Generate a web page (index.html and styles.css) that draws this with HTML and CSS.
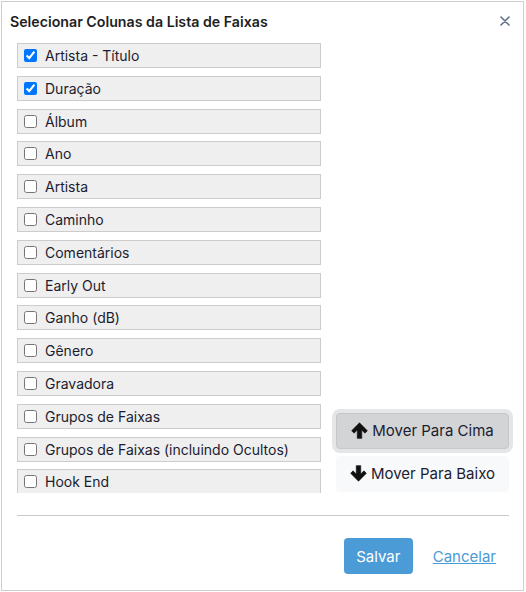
FILE: index.html
```html
<!DOCTYPE html>
<html lang="pt">
<head>
<meta charset="utf-8">
<title>Selecionar Colunas</title>
<link rel="stylesheet" href="styles.css">
</head>
<body>
<div class="dialog">
  <div class="header">
    <h1 class="title">Selecionar Colunas da Lista de Faixas</h1>
    <button class="close" aria-label="Fechar">
      <svg width="10" height="10" viewBox="0 0 10 10"><path d="M1 1L9 9M9 1L1 9" stroke="#5f6f86" stroke-width="1.6" stroke-linecap="round"/></svg>
    </button>
  </div>
  <div class="body">
    <div class="list">
      <label class="row"><input type="checkbox" checked><span>Artista - Título</span></label>
      <label class="row"><input type="checkbox" checked><span>Duração</span></label>
      <label class="row"><input type="checkbox"><span>Álbum</span></label>
      <label class="row"><input type="checkbox"><span>Ano</span></label>
      <label class="row"><input type="checkbox"><span>Artista</span></label>
      <label class="row"><input type="checkbox"><span>Caminho</span></label>
      <label class="row"><input type="checkbox"><span>Comentários</span></label>
      <label class="row"><input type="checkbox"><span>Early Out</span></label>
      <label class="row"><input type="checkbox"><span>Ganho (dB)</span></label>
      <label class="row"><input type="checkbox"><span>Gênero</span></label>
      <label class="row"><input type="checkbox"><span>Gravadora</span></label>
      <label class="row"><input type="checkbox"><span>Grupos de Faixas</span></label>
      <label class="row"><input type="checkbox"><span>Grupos de Faixas (incluindo Ocultos)</span></label>
      <label class="row"><input type="checkbox"><span>Hook End</span></label>
    </div>
    <div class="side">
      <button class="move focused">
        <svg class="arrow" width="17" height="17" viewBox="0 0 16 16"><path d="M8 0.8L15.4 8.2L13.1 10.5L10.1 7.5V15.4H5.9V7.5L2.9 10.5L0.6 8.2Z" fill="#111" stroke="#111" stroke-width="0.6" stroke-linejoin="round"/></svg>
        <span>Mover Para Cima</span>
      </button>
      <button class="move">
        <svg class="arrow" width="17" height="17" viewBox="0 0 16 16"><path d="M8 15.2L15.4 7.8L13.1 5.5L10.1 8.5V0.6H5.9V8.5L2.9 5.5L0.6 7.8Z" fill="#111" stroke="#111" stroke-width="0.6" stroke-linejoin="round"/></svg>
        <span>Mover Para Baixo</span>
      </button>
    </div>
  </div>
  <div class="sep"></div>
  <div class="footer">
    <button class="save">Salvar</button>
    <a class="cancel" href="#">Cancelar</a>
  </div>
</div>
</body>
</html>
```
FILE: styles.css
```css
html, body {
  margin: 0;
  padding: 0;
  background: #ffffff;
}
body {
  font-family: Inter, "Noto Sans", sans-serif;
  color: #1a1a2a;
}
.dialog {
  margin: 1px 0 0 1px;
  width: 521px;
  height: 588px;
  border: 1px solid #cfcfcf;
  background: #fff;
  display: flex;
  flex-direction: column;
}
.header {
  display: flex;
  justify-content: space-between;
  align-items: flex-start;
  padding: 10px 12px 0 8px;
}
.title {
  margin: 0;
  font-size: 14.2px;
  line-height: 20px;
  font-weight: 600;
  color: #1e1e24;
}
.close {
  border: 0;
  background: none;
  padding: 0;
  margin-top: 3px;
  width: 12px;
  height: 12px;
  display: flex;
  align-items: center;
  justify-content: center;
}
.body {
  display: flex;
  align-items: flex-end;
  margin-top: 11px;
  padding-left: 15px;
}
.list {
  width: 304px;
  height: 450px;
  overflow: hidden;
  display: flex;
  flex-direction: column;
  gap: 7.8px;
}
.row {
  flex: none;
  box-sizing: border-box;
  height: 25px;
  border: 1px solid #cccccc;
  background: #efefef;
  display: flex;
  align-items: center;
  padding-left: 6px;
  font-size: 14px;
  color: #1c1c30;
}
.row input {
  margin: 0 8px 0 0;
  width: 13px;
  height: 13px;
}
.side {
  margin-left: 15px;
  margin-bottom: 1px;
  display: flex;
  flex-direction: column;
  gap: 7px;
}
.move {
  box-sizing: border-box;
  width: 173px;
  height: 36px;
  border: 1px solid #f8f9fa;
  border-radius: 4px;
  background: #f8f9fa;
  display: flex;
  align-items: center;
  justify-content: center;
  gap: 4px;
  font-family: Inter, "Noto Sans", sans-serif;
  font-size: 15px;
  color: #1c1c30;
  padding: 0 0 1px;
}
.move.focused {
  background: #d3d4d5;
  border-color: #c6c7c8;
  box-shadow: 0 0 0 4px #e5e6e7;
}
.arrow {
  flex: none;
}
.sep {
  margin: 22px 14px 0 15px;
  height: 1px;
  background: #c8c8c8;
}
.footer {
  display: flex;
  justify-content: flex-end;
  align-items: center;
  gap: 20px;
  margin-top: 22px;
  padding-right: 27px;
}
.save {
  box-sizing: border-box;
  width: 69px;
  height: 36px;
  border: 0;
  border-radius: 4px;
  background: #4a9bd6;
  color: #fff;
  font-family: Inter, "Noto Sans", sans-serif;
  font-size: 15px;
}
.cancel {
  font-size: 15px;
  color: #4a9bd6;
  text-decoration: underline;
}
```
